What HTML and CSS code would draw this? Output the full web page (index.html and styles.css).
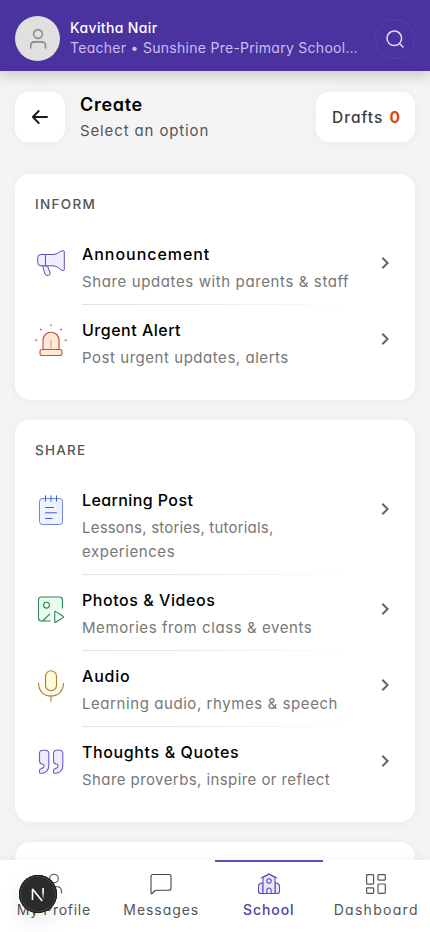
FILE: index.html
```html
<!DOCTYPE html>
<html lang="en">
<head>
<meta charset="utf-8">
<meta name="viewport" content="width=device-width, initial-scale=1">
<title>Create</title>
<link rel="stylesheet" href="styles.css">
</head>
<body>
<header class="topbar">
  <div class="avatar">
    <svg width="24" height="24" viewBox="0 0 24 24" fill="none" stroke="#8c8c8c" stroke-width="1.6" stroke-linecap="round"><circle cx="12" cy="7" r="4.4"/><path d="M4.7 21v-2.200c0-2.400 1.700-3.900 4-3.900h6.800c2.300 0 4 1.500 4 3.900V21"/></svg>
  </div>
  <div class="who">
    <div class="name"><span class="t-name">Kavitha Nair</span></div>
    <div class="role"><span class="t-role">Teacher • Sunshine Pre-Primary School…</span></div>
  </div>
  <button class="search" aria-label="Search">
    <svg width="20" height="20" viewBox="0 0 20 20" fill="none" stroke="#e4defa" stroke-width="1.5" stroke-linecap="round"><circle cx="9.300" cy="9.300" r="7.300"/><path d="M14.700 14.700 18 18"/></svg>
  </button>
</header>
<main class="content">
  <div class="pagehead">
    <button class="back" aria-label="Back">
      <svg width="20" height="20" viewBox="0 0 20 20" fill="none" stroke="#1a1a1a" stroke-width="1.9" stroke-linecap="round" stroke-linejoin="round"><path d="M17 10H3M8.700 4 2.900 10l5.800 6"/></svg>
    </button>
    <div class="titles">
      <h1><span class="t-create">Create</span></h1>
      <p><span class="t-select">Select an option</span></p>
    </div>
    <button class="drafts"><span class="t-drafts">Drafts</span><b>0</b></button>
  </div>

  <section class="card">
    <h2><span class="t-inform">INFORM</span></h2>
    <div class="row">
      <svg class="icon" viewBox="0 0 32 32" fill="#efedff" stroke="#5d50b5" stroke-width="1" stroke-linejoin="round"><path d="M7.500 17.500 10 26q1 2 3.300 1.400 2.500-.7 1.800-2.500L12.500 18z"/><path d="M10.500 6.500H6Q2.700 6.500 2.700 9.500v5.300q0 3 3.300 3h4.500z"/><path d="M10.500 6.500H18c4.500 0 6.500-3.200 9.500-3.900q1.800-.3 1.800 1.300v17.400q0 1.700-1.800 1.300C24.500 21.500 22.500 17.800 18 17.800h-7.500z"/></svg>
      <div class="text"><h3><span class="t-ann">Announcement</span></h3><p><span class="s-ann">Share updates with parents &amp; staff</span></p></div>
      <svg class="chev" viewBox="0 0 16 16"><path d="m5.300 2.700 5.300 5.300-5.300 5.300"/></svg>
    </div>
    <div class="row">
      <svg class="icon" viewBox="0 0 32 32" fill="#ffe9d8" stroke="#cf4b32" stroke-width="1.100" stroke-linejoin="round" stroke-linecap="round"><path d="M8 25.500V16a8 7.800 0 0 1 16 0v9.500z"/><rect x="5" y="25.500" width="22" height="6" rx="2"/><path d="M16 25V16" stroke="#e49a74"/><path d="M16 .8v.8M5.600 5.300l.5.5M26.400 5.300l-.5.5M.7 16.200h1M30.300 16.200h1" stroke-width="1.300"/></svg>
      <div class="text"><h3><span class="t-urg">Urgent Alert</span></h3><p><span class="s-urg">Post urgent updates, alerts</span></p></div>
      <svg class="chev" viewBox="0 0 16 16"><path d="m5.300 2.700 5.300 5.300-5.300 5.300"/></svg>
    </div>
  </section>

  <section class="card">
    <h2><span class="t-share">SHARE</span></h2>
    <div class="row">
      <svg class="icon" viewBox="0 0 32 32" fill="none" stroke="#3e5bc9" stroke-width="1" stroke-linecap="round"><rect x="4.500" y="4.500" width="23" height="26" rx="3" fill="#edf3ff" stroke="#6b86d8"/><path d="M10.500 1.800v5.400M16 1.800v5.400M21.500 1.800v5.400M10.500 13.500h8M10.500 18.800h11M10.500 24.500h6.500"/></svg>
      <div class="text"><h3><span class="t-learn">Learning Post</span></h3><p><span class="s-learn">Lessons, stories, tutorials,</span><br><span class="s-exp">experiences</span></p></div>
      <svg class="chev" viewBox="0 0 16 16"><path d="m5.300 2.700 5.300 5.300-5.300 5.300"/></svg>
    </div>
    <div class="row">
      <svg class="icon" viewBox="0 0 32 32" fill="none" stroke="#2c8450" stroke-width="1.100" stroke-linecap="round" stroke-linejoin="round"><path d="M27.500 15V6q0-3-3-3H6.500q-3 0-3 3v18q0 3 3 3H17V16z" fill="#e9fcef" stroke="none"/><path d="M27.500 14V6q0-3-3-3H6.500q-3 0-3 3v18q0 3 3 3H15M8 26.500l6.700-6.300"/><circle cx="11.500" cy="11.200" r="2.900"/><path d="M19.700 18.200v9.300q0 1.200 1.100.7l7.300-4.600q.9-.7 0-1.400l-7.300-4.600q-1.100-.6-1.100.6z" fill="#e9fcef"/></svg>
      <div class="text"><h3><span class="t-photo">Photos &amp; Videos</span></h3><p><span class="s-photo">Memories from class &amp; events</span></p></div>
      <svg class="chev" viewBox="0 0 16 16"><path d="m5.300 2.700 5.300 5.300-5.300 5.300"/></svg>
    </div>
    <div class="row">
      <svg class="icon" viewBox="0 0 32 32" fill="none" stroke="#b27a2c" stroke-width="1.100" stroke-linecap="round"><path d="M3.500 13.200C3.700 21 8.800 26 16 26s12.300-5 12.500-12.800" fill="#fffdf0"/><path d="M16 26v5"/><rect x="10.500" y="0.800" width="11" height="20" rx="5.500" fill="#fffad9"/></svg>
      <div class="text"><h3><span class="t-audio">Audio</span></h3><p><span class="s-audio">Learning audio, rhymes &amp; speech</span></p></div>
      <svg class="chev" viewBox="0 0 16 16"><path d="m5.300 2.700 5.300 5.300-5.300 5.300"/></svg>
    </div>
    <div class="row">
      <svg class="icon" viewBox="0 0 32 32" fill="#eeecff" stroke="#6c5fc9" stroke-width="1.100" stroke-linejoin="round"><path d="M4.500 7.500q0-3.300 3.300-3.300h2.700q3.300 0 3.300 3.300v11.800q0 7.200-7.300 8.200-2 .1-2-1.500v-1.300q0-1.600 1.500-1.900 3-.6 3-3.300 0-1.500-1.700-1.500-2.800 0-2.800-3z"/><path d="M18.500 7.500q0-3.300 3.300-3.300h2.700q3.300 0 3.300 3.300v11.800q0 7.200-7.300 8.200-2 .1-2-1.500v-1.300q0-1.600 1.500-1.900 3-.6 3-3.300 0-1.500-1.700-1.500-2.800 0-2.800-3z"/></svg>
      <div class="text"><h3><span class="t-quote">Thoughts &amp; Quotes</span></h3><p><span class="s-quote">Share proverbs, inspire or reflect</span></p></div>
      <svg class="chev" viewBox="0 0 16 16"><path d="m5.300 2.700 5.300 5.300-5.300 5.300"/></svg>
    </div>
  </section>

  <section class="card next"></section>
</main>
<nav class="tabs">
  <a class="tab">
    <svg width="24" height="24" viewBox="0 0 24 24" fill="none" stroke="#555" stroke-width="1.100" stroke-linecap="round"><circle cx="12" cy="6.500" r="4.300"/><path d="M4.500 21v-1.500q0-4.700 4.700-4.700h5.600q4.700 0 4.700 4.700V21"/></svg>
    <span class="n-prof">My Profile</span>
  </a>
  <a class="tab">
    <svg width="24" height="24" viewBox="0 0 24 24" fill="none" stroke="#444" stroke-width="1.100" stroke-linejoin="round"><path d="M4 2.500h16q2 0 2 2v11.700q0 2-2 2H7.300q-1 0-1.800.8L3.300 21.300q-1.300 1-1.300-.5V4.500q0-2 2-2z"/></svg>
    <span class="n-msg">Messages</span>
  </a>
  <a class="tab active">
    <svg width="24" height="24" viewBox="0 0 24 24" fill="#e9e5ff" stroke="#5f50b5" stroke-width="1.100" stroke-linejoin="round" stroke-linecap="round"><path d="M6 11H4.500q-3 .4-3 3.500v4.700q0 2.300 2.300 2.300H6zM18 11h1.500q3 .4 3 3.500v4.700q0 2.300-2.300 2.300H18z"/><path d="M6 5.200v16.300h12V5.200L12 2z"/><path d="M4.300 6 12 2l7.700 4" fill="none"/><circle cx="12" cy="9" r="2.200"/><path d="M9.800 21.500V18q.2-2 2.200-2t2.200 2v3.500z"/></svg>
    <span class="n-school">School</span>
  </a>
  <a class="tab">
    <svg width="24" height="24" viewBox="0 0 24 24" fill="none" stroke="#555" stroke-width="1.200"><rect x="2.600" y="2.600" width="7" height="9.500" rx=".8"/><rect x="14" y="2.600" width="7.300" height="5.500" rx=".8"/><rect x="2.600" y="15.800" width="7" height="5.600" rx=".8"/><rect x="14" y="12" width="7.300" height="9.400" rx=".8"/></svg>
    <span class="n-dash">Dashboard</span>
  </a>
  <div class="devbadge">
    <svg width="38" height="38" viewBox="0 0 38 38" fill="none"><defs><linearGradient id="f" x1="0" y1="0" x2="0" y2="1"><stop offset=".4" stop-color="#fff"/><stop offset="1" stop-color="#fff" stop-opacity=".1"/></linearGradient></defs><path d="M13.500 25V14l9.700 12" stroke="#fff" stroke-width="1.600" stroke-linejoin="bevel"/><rect x="23.300" y="13" width="1.600" height="11" fill="url(#f)"/></svg>
  </div>
</nav>
</body>
</html>
```

FILE: styles.css
```css
* { box-sizing: border-box; }
body {
  margin: 0;
  height: 932px;
  display: flex;
  flex-direction: column;
  overflow: hidden;
  background: #f4f4f4;
  font-family: "Inter", sans-serif;
  font-feature-settings: "cv11";
  color: #000;
}
h1, h2, h3, p { margin: 0; font-weight: inherit; }
button { border: 0; padding: 0; font: inherit; font-feature-settings: inherit; }
span { white-space: nowrap; }

.topbar {
  flex: none;
  height: 71px;
  padding: 6px 15px 0;
  display: flex;
  align-items: center;
  background: #4a339f;
  box-shadow: 0 4px 14px rgba(0, 0, 0, .2);
  z-index: 1;
}
.avatar {
  width: 45px;
  height: 45px;
  border-radius: 50%;
  background: #e0e0e0;
  display: grid;
  place-items: center;
}
.who { flex: 1; padding-left: 10px; margin-top: -2px; }
.name { font-size: 14px; line-height: 20px; font-weight: 500; color: #fff; }
.role { font-size: 14px; line-height: 20px; color: #cabdf5; }
.search {
  width: 40px;
  height: 40px;
  border-radius: 50%;
  background: none;
  border: 1px solid #5640ab;
  display: grid;
  place-items: center;
}

.content { flex: 1; min-height: 0; overflow: hidden; padding: 21px 15px 0; }
.pagehead { display: flex; align-items: center; height: 50px; margin-bottom: 32px; }
.back, .drafts {
  height: 50px;
  border-radius: 13px;
  background: #fff;
  box-shadow: 0 1px 12px rgba(0, 0, 0, .045);
}
.back { width: 50px; display: grid; place-items: center; }
.titles { flex: 1; padding-left: 15px; }
h1 { font-size: 18px; line-height: 26px; font-weight: 600; }
.titles p { font-size: 15px; line-height: 25px; color: #555; }
.drafts {
  width: 99px;
  display: flex;
  align-items: center;
  justify-content: space-between;
  padding: 0 15px 0 16px;
  font-size: 15.500px;
  font-weight: 500;
  color: #3d3d3d;
}
.drafts b { color: #d9480f; font-weight: 700; }

.card {
  background: #fff;
  border-radius: 15px;
  padding: 20px;
  margin-bottom: 20px;
  box-shadow: 0 1px 12px rgba(0, 0, 0, .045);
}
.card.next { height: 200px; }
h2 { font-size: 13.500px; line-height: 20px; font-weight: 500; color: #555; margin-bottom: 15px; }
.row { display: flex; align-items: flex-start; }
.icon { flex: none; width: 32px; height: 32px; margin: 19px 15px 0 0; }
.text { width: 268px; padding: 13px 0 10px; }
.row:not(:last-child) .text {
  border-bottom: 1px solid;
  border-image: linear-gradient(90deg, #e2e2e2, #ececec 50%, #fff) 1;
}
h3 { font-size: 16px; line-height: 24px; font-weight: 500; margin-bottom: 4px; }
.text p { font-size: 15px; line-height: 24px; color: #777; }
.chev {
  width: 16px;
  height: 16px;
  margin: 26px 2px 0 auto;
  fill: none;
  stroke: #666;
  stroke-width: 2;
}

.tabs {
  position: relative;
  z-index: 1;
  flex: none;
  height: 72px;
  display: flex;
  background: #fff;
  box-shadow: 0 0 10px rgba(0, 0, 0, .06);
}
.tab {
  flex: 1 1 0;
  min-width: 0;
  display: flex;
  flex-direction: column;
  align-items: center;
  padding-top: 10px;
  border-top: 2px solid transparent;
  font-size: 14px;
  line-height: 20px;
  color: #555;
}
.tab span { margin-top: 4px; }
.tab.active { border-top-color: #5f4fb8; color: #5040a8; font-weight: 500; }
.devbadge {
  position: absolute;
  left: 19px;
  top: 15px;
  width: 38px;
  height: 38px;
  border-radius: 50%;
  background: #2b2b2b;
  box-shadow: inset 0 0 0 1px #171717, inset 0 0 0 2px #454545, 0 10px 24px rgba(0, 0, 0, .09);
}
.devbadge svg { display: block; }

/* tracking */
.t-name { letter-spacing: .37px; }
.t-role { letter-spacing: .28px; }
.t-create { letter-spacing: .7px; }
.t-select { letter-spacing: .87px; }
.t-drafts { letter-spacing: 1px; }
.t-inform { letter-spacing: 1.3px; }
.t-share { letter-spacing: 1.2px; }
.t-ann { letter-spacing: .95px; }
.s-ann { letter-spacing: .61px; }
.t-urg { letter-spacing: .5px; }
.s-urg { letter-spacing: .54px; }
.t-learn { letter-spacing: .4px; }
.s-learn { letter-spacing: .2px; }
.s-exp { letter-spacing: .57px; }
.t-photo { letter-spacing: .55px; }
.s-photo { letter-spacing: .57px; }
.t-audio { letter-spacing: .8px; }
.s-audio { letter-spacing: .57px; }
.t-quote { letter-spacing: .62px; }
.s-quote { letter-spacing: .42px; }
.n-prof { letter-spacing: .7px; }
.n-msg { letter-spacing: .95px; }
.n-school { letter-spacing: .95px; }
.n-dash { letter-spacing: 1.3px; }
```
